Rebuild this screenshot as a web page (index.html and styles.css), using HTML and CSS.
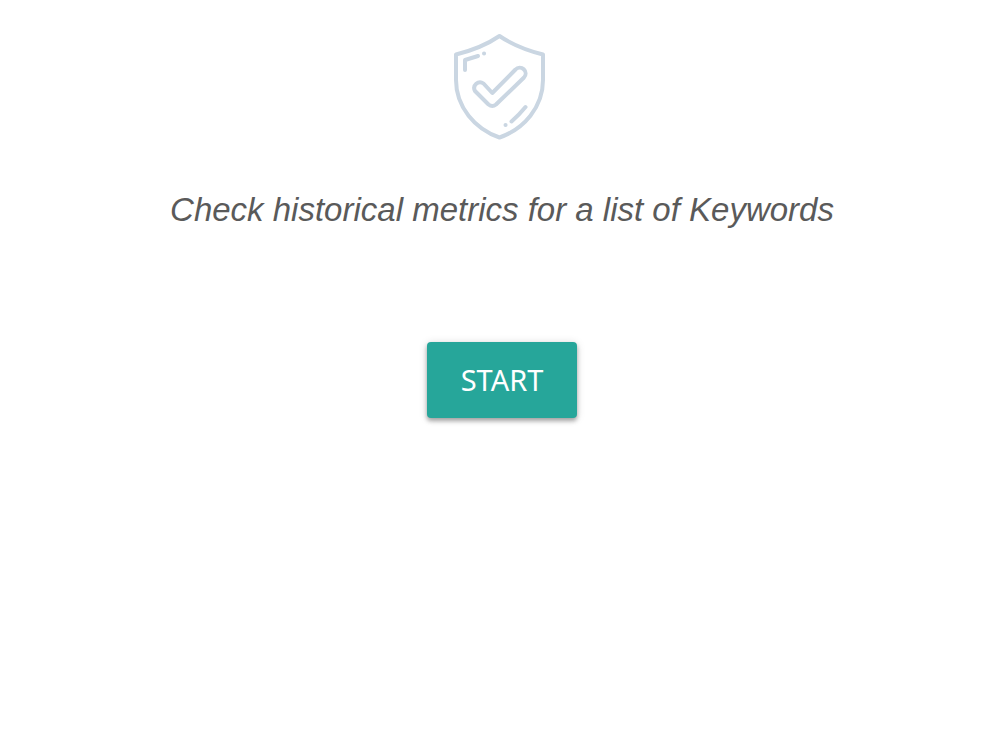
FILE: index.html
```html
<!DOCTYPE html>
<html lang="en">
<head>
  <meta charset="UTF-8">
  <meta name="viewport" content="width=device-width, initial-scale=1.0">
  <title>Keyword historical metrics</title>
  <link rel="stylesheet" href="styles.css">
</head>
<body>
  <main class="container">
    <svg class="shield" viewBox="2 0 120 130" aria-hidden="true">
      <path d="M59.500 16 Q77 28 103 34.500 V60 C103 87 84 109 59.500 117.500 C35 109 16 87 16 60 V34.500 Q42 28 59.500 16 Z"/>
      <path d="M52.300 73 L75.500 49.500 A5.800 5.800 0 0 1 84 57.500 L56 84.500 Q52.300 87.500 48.500 84.500 L35 71 A5.800 5.800 0 0 1 43.500 63.500 Z"/>
      <path d="M25 50 V40 L38 36 M44 33.500 H44.100"/>
      <path d="M85.500 87 Q79 95 71.500 101.500 M65.500 105 H65.600"/>
    </svg>
    <p class="intro">Check historical metrics for a list of Keywords</p>
    <button type="button" class="start-button">START</button>
  </main>
</body>
</html>
```
FILE: styles.css
```css
body {
  margin: 0;
  background-color: #fff;
  font-family: "Liberation Sans", Arial, sans-serif;
}
.container {
  display: flex;
  flex-direction: column;
  align-items: center;
  box-sizing: border-box;
  min-height: 100vh;
  padding: 20px 0 20px 4px;
}
.shield {
  width: 120px;
  height: 130px;
  fill: none;
  stroke: #cad6e2;
  stroke-width: 4;
  stroke-linecap: round;
  stroke-linejoin: round;
}
.intro {
  margin: 40px 0 0;
  color: #5a5a5a;
  font-size: 33px;
  font-style: italic;
  line-height: 40px;
  text-align: center;
}
.start-button {
  margin-top: 112px;
  padding: 18px 34px;
  border: none;
  border-radius: 4px;
  background-color: #26a69a;
  box-shadow: 0 3px 4px rgba(0, 0, 0, 0.3), 0 1px 8px rgba(0, 0, 0, 0.15);
  color: #fff;
  font-family: "Noto Sans", sans-serif;
  font-size: 29px;
  line-height: 40px;
  cursor: pointer;
}
.start-button:hover {
  background-color: #2bbbad;
}
```
